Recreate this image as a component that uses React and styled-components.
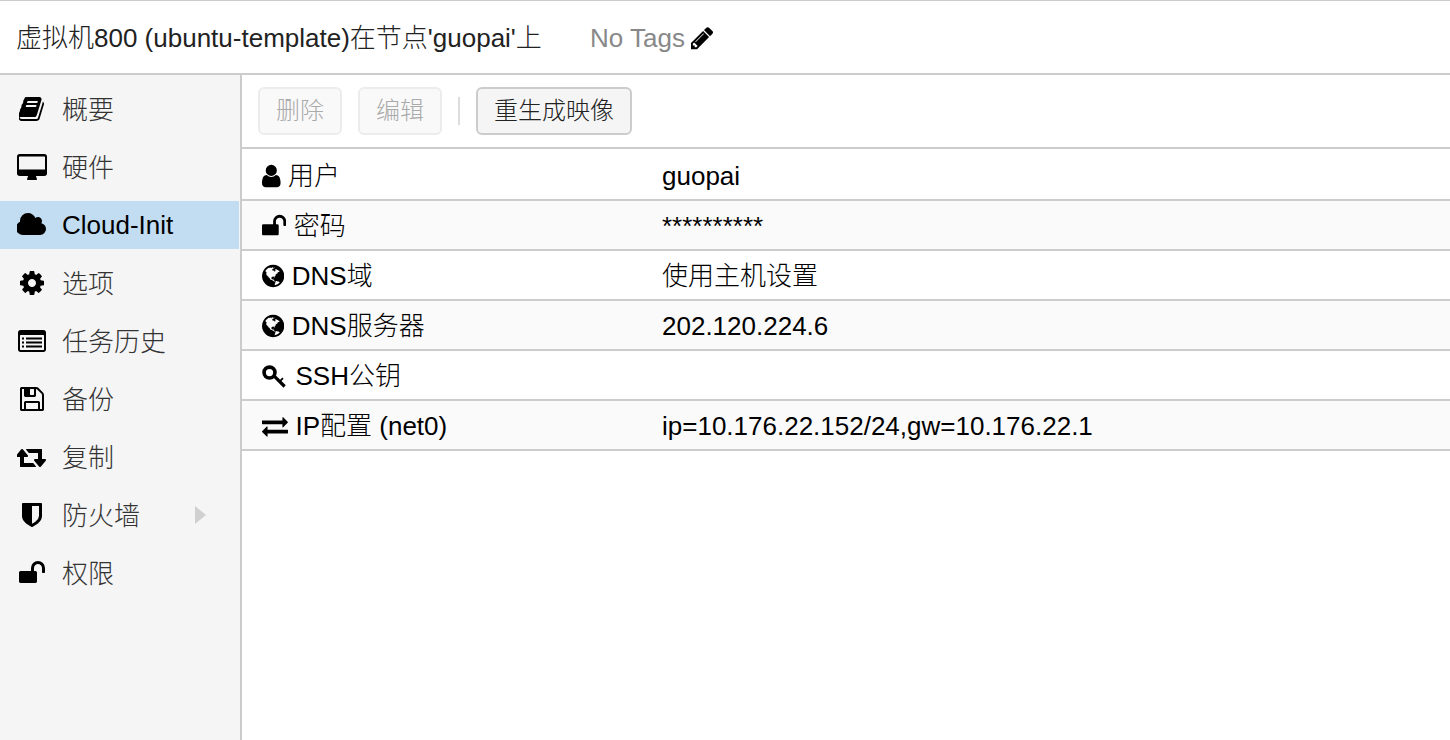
import React from "react";
import styled, { createGlobalStyle } from "styled-components";

const ICONS = {
  book: { x: 64, w: 1664, d: "M1639 478q40 57 18 129l-275 906q-19 64-76.5 107.5t-122.5 43.5h-923q-77 0-148.5-53.5t-99.5-131.5q-24-67-2-127 0-4 3-27t4-37q1-8-3-21.5t-3-19.5q2-11 8-21t16.5-23.5 16.5-23.5q23-38 45-91.5t30-91.5q3-10 .5-30t-.5-28q3-11 17-28t17-23q21-36 42-92t25-90q1-9-2.5-32t.5-28q4-13 22-30.5t22-22.5q19-26 42.5-84.5t27.5-96.5q1-8-3-25.5t-2-26.5q2-8 9-18t18-23 17-21q8-12 16.5-30.5t15-35 16-36 19.5-32 26.5-23.5 36-11.5 47.5 5.5l-1 3q38-9 51-9h761q74 0 114 56t18 130l-274 906q-36 119-71.5 153.5t-128.5 34.5h-869q-27 0-38 15-11 16-1 43 24 70 144 70h923q29 0 56-15.5t35-41.5l300-987q7-22 5-57 38 15 59 43zm-1064 2q-4 13 2 22.5t20 9.5h608q13 0 25.5-9.5t16.5-22.5l21-64q4-13-2-22.5t-20-9.5h-608q-13 0-25.5 9.5t-16.5 22.5zm-83 256q-4 13 2 22.5t20 9.5h608q13 0 25.5-9.5t16.5-22.5l21-64q4-13-2-22.5t-20-9.5h-608q-13 0-25.5 9.5t-16.5 22.5z" },
  desktop: { x: 0, w: 1920, d: "M160 64h1600q66 0 113 47t47 113v1088q0 66-47 113t-113 47h-544q0 37 16 77.5t32 71 16 43.5q0 26-19 45t-45 19h-512q-26 0-45-19t-19-45q0-14 16-44t32-70 16-78h-544q-66 0-113-47t-47-113v-1088q0-66 47-113t113-47zM1792 1056V256q0-32-32-32H160q-32 0-32 32v800z" },
  cloud: { x: 0, w: 1920, d: "M1856 1152q0 159-112.5 271.5t-271.5 112.5h-1088q-185 0-316.5-131.5t-131.5-316.5q0-132 71-241.5t187-163.5q-2-28-2-43 0-212 150-362t362-150q158 0 286.5 88t187.5 230q70-62 166-62 106 0 181 75t75 181q0 75-41 138 129 30 213 134.5t84 239.5z" },
  cog: { x: 128, w: 1536, d: "M1152 896q0-106-75-181t-181-75-181 75-75 181 75 181 181 75 181-75 75-181zm512-109v222q0 12-8 23t-20 13l-185 28q-19 54-39 91 35 50 107 138 10 12 10 25t-9 23q-27 37-99 108t-94 71q-12 0-26-9l-138-108q-44 23-91 38-16 136-29 186-7 28-36 28h-222q-14 0-24.5-8.5t-11.5-21.5l-28-184q-49-16-90-37l-141 107q-10 9-25 9-14 0-25-11-126-114-165-168-7-10-7-23 0-12 8-23 15-21 51-66.5t54-70.5q-27-50-41-99l-183-27q-13-2-21-12.5t-8-23.5v-222q0-12 8-23t19-13l186-28q14-46 39-92-40-57-107-138-10-12-10-24 0-10 9-23 26-36 98.5-107.5t94.5-71.5q13 0 26 10l138 107q44-23 91-38 16-136 29-186 7-28 36-28h222q14 0 24.5 8.5t11.5 21.5l28 184q49 16 90 37l142-107q9-9 24-9 13 0 25 10 129 119 165 170 7 8 7 22 0 12-8 23-15 21-51 66.5t-54 70.5q26 50 41 98l183 28q13 2 21 12.5t8 23.5z" },
  list: { x: 0, w: 1792, d: "M160 192h1472q66 0 113 47t47 113v1088q0 66-47 113t-113 47h-1472q-66 0-113-47t-47-113v-1088q0-66 47-113t113-47zM160 512q-32 0-32 32v896q0 32 32 32h1472q32 0 32-32v-896q0-32-32-32zM256 672h128v128h-128zM256 928h128v128h-128zM256 1184h128v128h-128zM512 672h1024v128h-1024zM512 928h1024v128h-1024zM512 1184h1024v128h-1024z" },
  save: { x: 128, w: 1536, d: "M512 1536h768v-384h-768v384zm896 0h128v-896q0-14-10-38.5t-20-34.5l-281-281q-10-10-34-20t-39-10v416q0 40-28 68t-68 28h-576q-40 0-68-28t-28-68v-416h-128v1280h128v-416q0-40 28-68t68-28h832q40 0 68 28t28 68v416zm-384-928v-320q0-13-9.5-22.5t-22.5-9.5h-192q-13 0-22.5 9.5t-9.5 22.5v320q0 13 9.5 22.5t22.5 9.5h192q13 0 22.5-9.5t9.5-22.5zm640 32v928q0 40-28 68t-68 28h-1344q-40 0-68-28t-28-68v-1344q0-40 28-68t68-28h928q40 0 88 20t76 48l280 280q28 28 48 76t20 88z" },
  retweet: { x: 0, w: 1920, d: "M1216 1504q0 13-9.5 22.5t-22.5 9.5h-960q-8 0-13.5-2t-9-7-5.5-8-3-11.5-1-11.5v-600h-192q-26 0-45-19t-19-45q0-24 15-41l320-384q19-22 49-22t49 22l320 384q15 17 15 41 0 26-19 45t-45 19h-192v384h576q16 0 25 11l160 192q7 10 7 21zm640-416q0 24-15 41l-320 384q-20 23-49 23t-49-23l-320-384q-15-17-15-41 0-26 19-45t45-19h192v-384h-576q-16 0-25-12l-160-192q-7-9-7-20 0-13 9.5-22.5t22.5-9.5h960q8 0 13.5 2t9 7 5.5 8 3 11.5 1 11.5v600h192q26 0 45 19t19 45z" },
  shield: { x: 192, w: 1408, d: "M1344 960v-640h-448v1137q119-63 213-137 235-184 235-360zm192-768v768q0 86-33.5 170.5t-83 150-118 127.5-126.5 103-121 77.5-89.5 49.5-42.5 20q-12 6-26 6t-26-6q-16-7-42.5-20t-89.5-49.5-121-77.5-126.5-103-118-127.5-83-150-33.5-170.5v-768q0-26 19-45t45-19h1152q26 0 45 19t19 45z" },
  unlock: { x: 64, w: 1664, d: "M1728 576v256q0 26-19 45t-45 19h-64q-26 0-45-19t-19-45v-256q0-106-75-181t-181-75-181 75-75 181v192h96q40 0 68 28t28 68v576q0 40-28 68t-68 28h-960q-40 0-68-28t-28-68v-576q0-40 28-68t68-28h672v-192q0-185 131.5-316.5t316.5-131.5 316.5 131.5 131.5 316.5z" },
  user: { x: 256, w: 1280, d: "M1536 1399q0 109-62.5 187t-150.5 78h-854q-88 0-150.5-78t-62.5-187q0-85 8.5-160.5t31.5-152 58.5-131 94-89 134.5-34.5q131 128 313 128t313-128q76 0 134.5 34.5t94 89 58.5 131 31.5 152 8.5 160.5zm-256-887q0 159-112.5 271.5t-271.5 112.5-271.5-112.5-112.5-271.5 112.5-271.5 271.5-112.5 271.5 112.5 112.5 271.5z" },
  globe: { x: 128, w: 1536, d: "M896 128q209 0 385.5 103t279.5 279.5 103 385.5-103 385.5-279.5 279.5-385.5 103-385.5-103-279.5-279.5-103-385.5 103-385.5 279.5-279.5 385.5-103zm274 521q-2 1-9.5 9.5t-13.5 9.5q2 0 4.5-5t5-11 3.5-7q6-7 22-15 14-6 52-12 34-8 51 11-2-2 9.5-13t14.5-12q3-2 15-4.5t15-7.5l2-22q-12 1-17.5-7t-6.5-21q0 2-6 8 0-7-4.5-8t-11.5 1-9 1q-10-3-15-7.5t-8-16.5-4-15q-2-5-9.5-11t-9.5-10q-1-2-2.5-5.5t-3-6.5-4-5.5-5.5-2.5-7 5-7.5 10-4.5 5q-3-2-6-1.5t-4.5 1-4.5 3-5 3.5q-3 2-8.5 3t-8.5 2q15-5-1-11-10-4-16-3 9-4 7.5-12t-8.5-14h5q-1-4-8.5-8.5t-17.5-8.5-13-6q-8-5-34-9.5t-33-.5q-5 6-4.5 10.5t4 14 3.5 12.5q1 6-5.5 13t-6.5 12q0 7 14 15.5t10 21.5q-3 8-16 16t-16 12q-5 8-1.5 18.5t10.5 16.5q2 2 1.5 4t-3.5 4.5-5.5 4-6.5 3.5l-3 2q-11 5-20.5-6t-13.5-26q-7-25-16-30-23-8-29 1-5-13-41-26-25-9-58-4 6-1 0-15-7-15-19-12 3-6 4-17.5t1-13.5q3-13 12-23 1-1 7-8.5t9.5-13.5.5-6q35 4 50-11 5-5 11.5-17t10.5-17q9-6 14-5.5t14.5 5.5 14.5 5q14 1 15.5-11t-7.5-20q12 1 3-17-4-7-8-9-12-4-27 5-8 4 2 8-1-1-9.5 10.5t-16.5 17.5-16-5q-1-1-5.5-13.5t-9.5-13.5q-8 0-16 15 3-8-11-15t-24-8q19-12-8-27-7-4-20.5-5t-19.5 4q-5 7-5.5 11.5t5 8 10.5 5.5 11.5 4 8.5 3q14 10 8 14-2 1-8.5 3.5t-11.5 4.5-6 4q-3 4 0 14t-2 14q-5-5-9-17.5t-7-16.5q7 9-25 6l-10-1q-4 0-16 2t-20.5 1-13.5-8q-4-8 0-20 1-4 4-2-4-3-11-9.5t-10-8.5q-46 15-94 41 6 1 12-1 5-2 13-6.5t10-5.5q34-14 42-7l5-5q14 16 20 25-7-4-30-1-20 6-22 12 7 12 5 18-4-3-11.5-10t-14.5-11-15-5q-16 0-22 1-146 80-235 222 7 7 12 8 4 1 5 9t2.5 11 11.5-3q9 8 3 19 1-1 44 27 19 17 21 21 3 11-10 18-1-2-9-9t-9-4q-3 5 .5 18.5t10.5 12.5q-7 0-9.5 16t-2.5 35.5-1 23.5l2 1q-3 12 5.5 34.5t21.5 19.5q-13 3 20 43 6 8 8 9 3 2 12 7.5t15 10 10 10.5q4 5 10 22.5t14 23.5q-2 6 9.5 20t10.5 23q-1 0-2.5 1t-2.5 1q3 7 15.5 14t15.5 13q1 3 2 10t3 11 8 2q2-20-24-62-15-25-17-29-3-5-5.5-15.5t-4.5-14.5q2 0 6 1.5t8.5 3.5 7.5 4 2 3q-3 7 2 17.5t12 18.5 17 19 12 13q6 6 14 19.5t0 13.5q9 0 20 10.5t17 19.5q5 8 8 26t5 24q2 7 8.5 13.5t12.5 9.5l16 8 13 7q5 2 18.5 10.5t21.5 11.5q10 4 16 4t14.5-2.5 13.5-3.5q15-2 29 15t21 21q36 19 55 11-2 1 .5 7.5t8 15.5 9 14.5 5.5 8.5q5 6 18 15t18 15q6-4 7-9-3 8 7 20t18 10q14-3 14-32-31 15-49-18 0-1-2.5-5.5t-4-8.5-2.5-8.5 0-7.5 5-3q9 0 10-3.5t-2-12.5-4-13q-1-8-11-20t-12-15q-5 9-16 8t-16-9q0 1-1.5 5.5t-1.5 6.5q-13 0-15-1 1-3 2.5-17.5t3.5-22.5q1-4 5.5-12t7.5-14.5 4-12.5-4.5-9.5-17.5-2.5q-19 1-26 20-1 3-3 10.5t-5 11.5-9 7q-7 3-24 2t-24-5q-13-8-22.5-29t-9.5-37q0-10 2.5-26.5t3-25-5.5-24.5q3-2 9-9.5t10-10.5q2-1 4.5-1.5t4.5 0 4-1.5 3-6q-1-1-4-3-3-3-4-3 7 3 28.5-1.5t27.5 1.5q15 11 22-2 0-1-2.5-9.5t-.5-13.5q5 27 29 9 3 3 15.5 5t17.5 5q3 2 7 5.5t5.5 4.5 5-.5 8.5-6.5q10 14 12 24 11 40 19 44 7 3 11 2t4.5-9.5 0-14-1.5-12.5l-1-8v-18l-1-8q-15-3-18.5-12t1.5-18.5 15-18.5q1-1 8-3.5t15.5-6.5 12.5-8q21-19 15-35 7 0 11-9-1 0-5-3t-7.5-5-4.5-2q9-5 2-16 5-3 7.5-11t7.5-10q9 12 21 2 8-8 1-16 5-7 20.5-10.5t18.5-9.5q7 2 8-2t1-12 3-12q4-5 15-9t13-5l17-11q3-4 0-4 18 2 31-11 10-11-6-20 3-6-3-9.5t-15-5.5q3-1 11.5-.5t10.5-1.5q15-10-7-16-17-5-43 12zm-163 877q206-36 351-189-3-3-12.5-4.5t-12.5-3.5q-18-7-24-8 1-7-2.5-13t-8-9-12.5-8-11-7q-2-2-7-6t-7-5.5-7.5-4.5-8.5-2-10 1l-3 1q-3 1-5.5 2.5t-5.5 3-4 3 0 2.5q-21-17-36-22-5-1-11-5.5t-10.5-7-10-1.5-11.5 7q-5 5-6 15t-2 13q-7-5 0-17.5t2-18.5q-3-6-10.5-4.5t-12 4.5-11.5 8.5-9 6.5-8.5 5.5-8.5 7.5q-3 4-6 12t-5 11q-2-4-11.5-6.5t-9.5-5.5q2 10 4 35t5 38q7 31-12 48-27 25-29 40-4 22 12 26 0 7-8 20.5t-7 21.5q0 6 2 16z" },
  key: { x: 0, w: 1792, d: "M17 655a500 500 0 1 1 1000 0a500 500 0 1 1-1000 0zM267 655a250 250 0 1 0 500 0a250 250 0 1 0-500 0zM938 842L1638 1542L1482 1698L782 998zM1250 1154L1400 1004L1490 1094L1340 1244z" },
  exchange: { x: 0, w: 1792, d: "M1792 1184v192q0 13-9.5 22.5t-22.5 9.5h-1376v192q0 13-9.5 22.5t-22.5 9.5q-12 0-24-10l-319-320q-9-9-9-22 0-14 9-23l320-320q9-9 23-9 13 0 22.5 9.5t9.5 22.5v192h1376q13 0 22.5 9.5t9.5 22.5zm0-544q0 14-9 23l-320 320q-9 9-23 9-13 0-22.5-9.5t-9.5-22.5v-192h-1376q-13 0-22.5-9.5t-9.5-22.5v-192q0-13 9.5-22.5t22.5-9.5h1376v-192q0-14 9-23t23-9q12 0 24 10l319 319q9 9 9 23z" },
  pencil: { x: 128, w: 1536, d: "M491 1536l91-91-235-235-91 91v107h128v128h107zm523-928q0-22-22-22-10 0-17 7l-542 542q-7 7-7 17 0 22 22 22 10 0 17-7l542-542q7-7 7-17zm-54-192l416 416-832 832h-416v-416zm683 96q0 53-37 90l-166 166-416-416 166-165q36-38 90-38 53 0 91 38l235 234q37 39 37 91z" },
};

const NAV = [
  { icon: "book", label: "概要" },
  { icon: "desktop", label: "硬件" },
  { icon: "cloud", label: "Cloud-Init", active: true },
  { icon: "cog", label: "选项" },
  { icon: "list", label: "任务历史" },
  { icon: "save", label: "备份" },
  { icon: "retweet", label: "复制" },
  { icon: "shield", label: "防火墙", arrow: true },
  { icon: "unlock", label: "权限" },
];

const ROWS = [
  { icon: "user", name: "用户", value: "guopai" },
  { icon: "unlock", name: "密码", value: "**********" },
  { icon: "globe", name: "DNS域", value: "使用主机设置" },
  { icon: "globe", name: "DNS服务器", value: "202.120.224.6" },
  { icon: "key", name: "SSH公钥", value: "" },
  { icon: "exchange", name: "IP配置 (net0)", value: "ip=10.176.22.152/24,gw=10.176.22.1" },
];

const Icon = ({ name, size = 26 }) => {
  const { x, w, d } = ICONS[name];
  return (
    <Glyph viewBox={`${x} 0 ${w} 1792`} width={(w / 1792) * size} height={size}>
      <path d={d} />
    </Glyph>
  );
};

const App = () => {
  return (
    <Page>
      <GlobalStyle />
      <TitleBar>
        <Title>虚拟机800 (ubuntu-template)在节点'guopai'上</Title>
        <Tags>No Tags</Tags>
        <Icon name="pencil" />
      </TitleBar>
      <Body>
        <Sidebar>
          {NAV.map((item) => (
            <NavItem key={item.label} $active={item.active}>
              <NavIcon>
                <Icon name={item.icon} size={28} />
              </NavIcon>
              <NavLabel $active={item.active}>{item.label}</NavLabel>
              {item.arrow && <Arrow />}
            </NavItem>
          ))}
        </Sidebar>
        <Main>
          <Toolbar>
            <Button disabled>删除</Button>
            <Button disabled>编辑</Button>
            <Separator />
            <Button>重生成映像</Button>
          </Toolbar>
          <Table>
            {ROWS.map((row) => (
              <Row key={row.name}>
                <NameCell>
                  <Icon name={row.icon} />
                  <span>{row.name}</span>
                </NameCell>
                <span>{row.value}</span>
              </Row>
            ))}
          </Table>
        </Main>
      </Body>
    </Page>
  );
};

export default App;

const GlobalStyle = createGlobalStyle`
  html, body {
    margin: 0;
    padding: 0;
    overflow: hidden;
  }
  * {
    box-sizing: border-box;
  }
`;

const Page = styled.div`
  width: 1450px;
  height: 740px;
  display: flex;
  flex-direction: column;
  background-color: #fff;
  color: #000;
  font-family: "Liberation Sans", "Noto Sans CJK SC", sans-serif;
  font-size: 26px;
  font-weight: 300;
  line-height: 30px;
`;

const Glyph = styled.svg`
  flex: none;
  fill: currentColor;
  display: block;
`;

const TitleBar = styled.div`
  height: 75px;
  flex: none;
  display: flex;
  align-items: center;
  padding: 2px 0 0 16px;
  border-top: 1px solid #ccc;
  border-bottom: 2px solid #ccc;
`;

const Title = styled.div`
  width: 574px;
  color: #222;
`;

const Tags = styled.div`
  color: #888;
  margin-right: 6px;
`;

const Body = styled.div`
  flex: 1;
  display: flex;
  min-height: 0;
`;

const Sidebar = styled.div`
  width: 242px;
  flex: none;
  display: flex;
  flex-direction: column;
  gap: 10px;
  padding: 10px 0 0;
  background-color: #f5f5f5;
  border-right: 2px solid #ccc;
`;

const NavItem = styled.div`
  height: 48px;
  display: flex;
  align-items: center;
  gap: 15px;
  padding-left: 17px;
  color: ${({ $active }) => ($active ? "#000" : "#333")};
  background-color: ${({ $active }) => ($active ? "#c2ddf2" : "transparent")};
  margin-right: ${({ $active }) => ($active ? "1px" : "0")};
`;

const NavLabel = styled.span`
  padding-top: ${({ $active }) => ($active ? "0" : "2px")};
`;

const NavIcon = styled.div`
  width: 30px;
  display: flex;
  justify-content: center;
  color: #000;
`;

const Arrow = styled.div`
  margin-left: auto;
  margin-right: 34px;
  width: 0;
  height: 0;
  border-style: solid;
  border-width: 9.5px 0 9.5px 11px;
  border-color: transparent transparent transparent #d0d0d0;
`;

const Main = styled.div`
  flex: 1;
  min-width: 0;
  display: flex;
  flex-direction: column;
`;

const Toolbar = styled.div`
  height: 72px;
  flex: none;
  display: flex;
  align-items: center;
  gap: 16px;
  padding-left: 16px;
`;

const Button = styled.button`
  height: 48px;
  padding: 0 16px;
  font: inherit;
  font-size: 24px;
  color: #222;
  background-color: #f5f5f5;
  border: 2px solid #ccc;
  border-radius: 6px;
  &:disabled {
    color: #aaa;
    background-color: #f9f9f9;
    border-color: #ececec;
  }
`;

const Separator = styled.div`
  width: 2px;
  height: 28px;
  background-color: #ddd;
`;

const Table = styled.div`
  display: flex;
  flex-direction: column;
  padding-top: 2px;
  border-top: 2px solid #ccc;
`;

const Row = styled.div`
  height: 50px;
  padding-top: 2px;
  display: flex;
  align-items: center;
  border-bottom: 2px solid #ccc;
  &:nth-child(even) {
    background-color: #fafafa;
  }
`;

const NameCell = styled.div`
  width: 420px;
  padding-left: 20px;
  display: flex;
  align-items: center;
  gap: 7.5px;
`;
